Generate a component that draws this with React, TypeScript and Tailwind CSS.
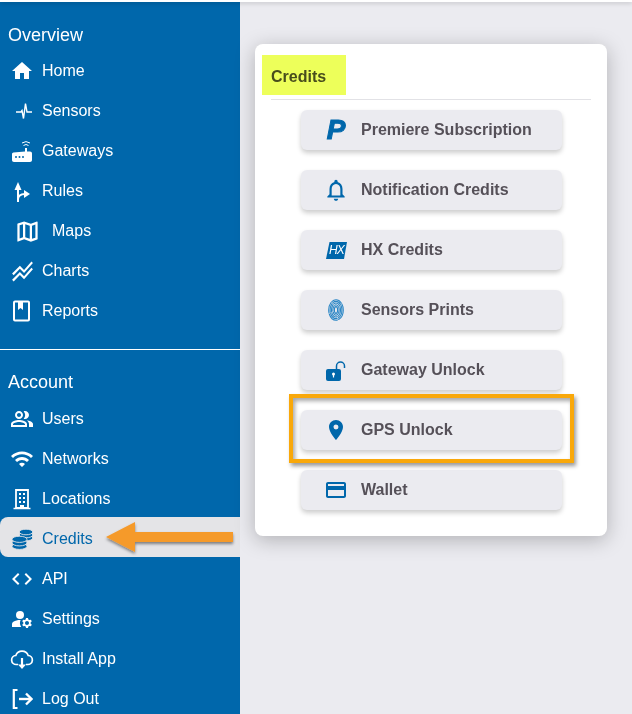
import React from "react";
import { MdHome, MdOutlineMap, MdStackedLineChart, MdOutlinePeopleAlt, MdWifi, MdCode, MdManageAccounts, MdNotificationsNone, MdLocationOn, MdOutlineCreditCard } from "react-icons/md";

const Sensors = () => (
  <svg className="ml-1 shrink-0" width="20" height="20" viewBox="0 0 20 20" fill="none" stroke="currentColor" strokeWidth="1.400"><path d="M2 11h5l1-1.500 1.500 8 2-15 1.500 8.500h5" /></svg>
);
const Gateway = () => (
  <svg width="24" height="24" viewBox="0 0 24 24" fill="currentColor">
    <path d="M3.500 13.500L15 12.500V9h2v3.500h3c1.200 0 2 .8 2 2V21c0 1.200-.8 2-2 2H4c-1.200 0-2-.8-2-2v-6c0-.8.700-1.400 1.500-1.500z" />
    <circle cx="6" cy="18" r="1" fill="#0067ab" /><circle cx="9.500" cy="18" r="1" fill="#0067ab" /><circle cx="13" cy="18" r="1" fill="#0067ab" />
    <path d="M13.500 6.500a4 4 0 0 1 5 0M12 4a7 7 0 0 1 8 0" fill="none" stroke="currentColor" strokeWidth="1" />
  </svg>
);
const Rules = () => (
  <svg width="24" height="24" viewBox="0 0 24 24" fill="currentColor">
    <path d="M8 3l3.500 8H4.500z" />
    <path d="M7 10h2v13H7z" />
    <path d="M8 21c0-3.500 2.500-6 7-6" fill="none" stroke="currentColor" strokeWidth="1.800" />
    <path d="M20 15l-6 4v-8z" />
  </svg>
);
const Reports = () => (
  <svg width="24" height="24" viewBox="0 0 24 24" fill="none"><rect x="4" y="2.500" width="15" height="19" rx="1" stroke="currentColor" strokeWidth="2" /><path d="M8 3v8l2.500-2 2.500 2V3z" fill="currentColor" /></svg>
);
const Building = () => (
  <svg width="24" height="24" viewBox="0 0 24 24" fill="none"><path d="M6 3h12v18H6z" stroke="currentColor" strokeWidth="1.800" /><path d="M3.500 21.500h17" stroke="currentColor" strokeWidth="1.500" /><path d="M9 6h2v2H9zM13 6h2v2h-2zM9 10h2v2H9zM13 10h2v2h-2zM9 14h2v2H9zM13 14h2v2h-2zM10 18h4v3h-4z" fill="currentColor" /></svg>
);
const Coins = () => (
  <svg width="21" height="21" viewBox="0 0 21 21" fill="#0067ab" stroke="#e4e4e7" strokeWidth="0.900">
    <ellipse cx="14" cy="9" rx="6.800" ry="2.800" />
    <ellipse cx="14" cy="6" rx="6.800" ry="2.800" />
    <ellipse cx="14" cy="3" rx="6.800" ry="2.800" />
    <ellipse cx="7.500" cy="17.300" rx="7.500" ry="3.100" />
    <ellipse cx="7.500" cy="13.800" rx="7.500" ry="3.100" />
    <ellipse cx="7.500" cy="10.300" rx="7.500" ry="3.100" />
  </svg>
);
const Install = () => (
  <svg width="24" height="24" viewBox="0 0 24 24" fill="none" stroke="currentColor" strokeWidth="1.700">
    <path d="M8 17.500H6.500A4.500 4.500 0 0 1 5.800 8.500a6.600 6.600 0 0 1 12.400 0A4.500 4.500 0 0 1 17.500 17.500H16" />
    <path d="M12 11v8" strokeWidth="2.200" />
    <path d="M8 17.500h8L12 22z" fill="currentColor" stroke="none" />
  </svg>
);
const LogOut = () => (
  <svg width="22" height="24" viewBox="0 0 22 24" fill="none" stroke="currentColor"><path d="M6.500 3H2.800v18h3.700" strokeWidth="2.200" /><path d="M8 12h12" strokeWidth="2.400" /><path d="M15 6.500l5.500 5.500-5.500 5.500" strokeWidth="2.400" /></svg>
);
const Fingerprint = () => (
  <svg width="16" height="22" viewBox="0 0 16 22" fill="none" stroke="#2b86c5" strokeWidth="1.100" strokeLinecap="round">
    <ellipse cx="8" cy="11" rx="7.300" ry="10.200" strokeDasharray="11 1.200" />
    <ellipse cx="8" cy="11" rx="5.900" ry="8.600" strokeDasharray="9 1.200" />
    <ellipse cx="8" cy="11" rx="4.500" ry="7" strokeDasharray="7 1.200" />
    <ellipse cx="8" cy="11" rx="3.100" ry="5.200" strokeDasharray="5 1" />
    <ellipse cx="8" cy="11" rx="1.600" ry="3.400" />
  </svg>
);
const HX = () => (
  <svg width="21" height="17" viewBox="0 0 21 17">
    <path d="M3.500 0H21l-3 17H0z" fill="currentColor" />
    <text x="10.500" y="11.500" textAnchor="middle" fill="#fff" fontFamily="'Liberation Sans'" fontStyle="italic" fontWeight="400" fontSize="12" letterSpacing="-0.800">HX</text>
  </svg>
);
const OpenLock = () => (
  <svg width="20" height="22" viewBox="0 0 20 22">
    <rect x="0" y="10" width="15" height="12" rx="2" fill="currentColor" />
    <circle cx="7.500" cy="15" r="1.500" fill="#fff" />
    <path d="M6.900 15h1.200v3.500H6.900z" fill="#fff" />
    <path d="M10.500 10V7a4 4 0 0 1 8 0v2" fill="none" stroke="currentColor" strokeWidth="1.500" />
  </svg>
);

const overview: [string, React.ReactNode, boolean?][] = [
  ["Home", <MdHome size={24} />],
  ["Sensors", <Sensors />],
  ["Gateways", <Gateway />],
  ["Rules", <Rules />],
  ["Maps", <MdOutlineMap size={27} />, true],
  ["Charts", <MdStackedLineChart size={25} />],
  ["Reports", <Reports />],
];
const account: [string, React.ReactNode, boolean?][] = [
  ["Users", <MdOutlinePeopleAlt size={24} />],
  ["Networks", <MdWifi size={24} />],
  ["Locations", <Building />],
  ["Credits", <Coins />],
  ["API", <MdCode size={24} />],
  ["Settings", <MdManageAccounts size={24} />],
  ["Install App", <Install />],
  ["Log Out", <LogOut />],
];
const buttons: [string, React.ReactNode][] = [
  ["Premiere Subscription", <span className="font-['Liberation_Sans'] italic font-bold text-[28px] leading-none [-webkit-text-stroke:1px_#0067ab]">P</span>],
  ["Notification Credits", <MdNotificationsNone size={26} />],
  ["HX Credits", <HX />],
  ["Sensors Prints", <Fingerprint />],
  ["Gateway Unlock", <OpenLock />],
  ["GPS Unlock", <MdLocationOn size={24} />],
  ["Wallet", <MdOutlineCreditCard size={24} />],
];

function Row({ label, icon, wide }: { label: string; icon: React.ReactNode; wide?: boolean }) {
  const active = label === "Credits";
  return (
    <div className={`flex h-10 items-center pl-[10px] ${active ? "-mt-[2px] mb-[2px] rounded-l-lg bg-[#e4e4e7] pt-[4px] text-[#0067ab]" : "text-white"}`}>
      <span className={`flex h-6 shrink-0 items-center justify-center ${wide ? "ml-[5px] w-[37px] justify-start" : "w-8 justify-start"}`}>
        <span className="flex w-6 justify-center [&>svg]:shrink-0">{icon}</span>
      </span>
      <span className="text-base">{label}</span>
    </div>
  );
}

export default function App() {
  return (
    <div className="relative h-[714px] w-[632px] overflow-hidden bg-[#ebebf0] font-['Liberation_Sans',Arial,sans-serif]">
      <div className="relative z-10 h-[2px] bg-white shadow-[0_1px_4px_rgba(0,0,0,0.25)]" />
      <div className="flex h-[712px]">
        <aside className="w-[240px] shrink-0 bg-[#0067ab]">
          <div className="pl-2 pt-[22px] text-[18px] leading-[22px] text-white">Overview</div>
          <div className="mt-[5px]">
            {overview.map(([l, i, w]) => <Row key={l} label={l} icon={i} wide={w} />)}
          </div>
          <div className="mt-[18px] h-px bg-white" />
          <div className="pl-2 pt-[21px] text-[18px] leading-[22px] text-white">Account</div>
          <div className="mt-[6px]">
            {account.map(([l, i]) => <Row key={l} label={l} icon={i} />)}
          </div>
        </aside>
        <main className="pl-[15px] pt-[42px]">
          <div className="h-[492px] w-[352px] rounded-lg bg-white px-4 shadow-[0_4px_20px_rgba(0,0,0,0.25)]">
            <div className="flex h-[56px] items-center border-b border-[#e2e2e6] pt-[10px] text-base font-bold text-[#4d4d4d]">Credits</div>
            <div className="ml-[30px] mt-[10px] flex w-[261px] flex-col gap-5">
              {buttons.map(([l, i]) => (
                <div key={l} className="flex h-10 items-center rounded-md bg-[#ebebf0] pl-[23px] shadow-[0_3px_5px_rgba(0,0,0,0.2)]">
                  <span className="flex w-6 shrink-0 justify-center text-[#0067ab] [&>svg]:shrink-0">{i}</span>
                  <span className="ml-[13px] text-base font-bold text-[#555058]">{l}</span>
                </div>
              ))}
            </div>
          </div>
        </main>
      </div>
      {/* annotations */}
      <div className="absolute left-[262px] top-[55px] h-[40px] w-[84px] bg-[#edff5a] mix-blend-multiply" />
      <div className="absolute left-[289px] top-[394px] h-[69px] w-[285px] border-4 border-[#f9a80a] shadow-[2px_3px_4px_rgba(0,0,0,0.4),inset_2px_3px_4px_rgba(0,0,0,0.35)]" />
      <svg className="absolute left-[100px] top-[515px]" width="140" height="46" viewBox="0 0 140 46">
        <defs><filter id="s" x="-10%" y="-30%" width="120%" height="170%"><feDropShadow dx="0" dy="2" stdDeviation="1.500" floodColor="#000" floodOpacity="0.45" /></filter></defs>
        <path d="M6 22L35 7v10h98v10H35v10z" fill="#f59a2b" filter="url(#s)" />
      </svg>
    </div>
  );
}
